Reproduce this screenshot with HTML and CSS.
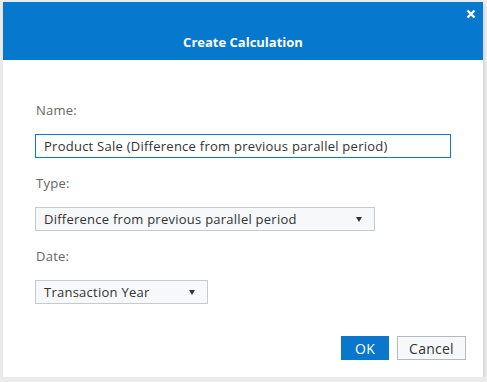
FILE: index.html
```html
<!DOCTYPE html>
<html lang="en">
<head>
    <meta charset="UTF-8" />
    <title>Create Calculation</title>
    <link rel="stylesheet" href="styles.css">
</head>
<body>
<div class="dialog">
    <div class="dialog-header">
        <h1>Create Calculation</h1>
        <button class="close" title="Close">
            <svg width="10" height="10" viewBox="0 0 10 10"><path d="M1.5 1.5 L8.5 8.5 M8.5 1.5 L1.5 8.5" stroke="#fff" stroke-width="2.4"/></svg>
        </button>
    </div>
    <div class="dialog-body">
        <label class="field-label" for="name">Name:</label>
        <input class="text-input" id="name" type="text" value="Product Sale (Difference from previous parallel period)" />

        <label class="field-label">Type:</label>
        <div class="dropdown dropdown-type">
            <span>Difference from previous parallel period</span>
            <i class="caret"></i>
        </div>

        <label class="field-label">Date:</label>
        <div class="dropdown dropdown-date">
            <span>Transaction Year</span>
            <i class="caret"></i>
        </div>

        <div class="actions">
            <button class="btn btn-primary">OK</button>
            <button class="btn">Cancel</button>
        </div>
    </div>
</div>
</body>
</html>
```

FILE: styles.css
```css
body {
    margin: 0;
    background-color: #ebebeb;
    font-family: "Open Sans", Lato, sans-serif;
    font-size: 13px;
    color: #333;
}
.dialog {
    width: 480px;
    height: 375px;
    margin: 2px 0 0 3px;
    background-color: white;
    box-shadow: 1px 2px 3px rgba(0,0,0,0.12);
    display: flex;
    flex-direction: column;
}
.dialog-header {
    position: relative;
    height: 58px;
    box-sizing: border-box;
    padding-bottom: 10px;
    background-color: #0678cd;
    display: flex;
    align-items: flex-end;
    justify-content: center;
}
.dialog-header h1 {
    margin: 0;
    font-size: 13px;
    line-height: 16px;
    font-weight: bold;
    color: white;
}
.close {
    position: absolute;
    top: 5px;
    right: 5px;
    width: 14px;
    height: 14px;
    padding: 0;
    border: none;
    background: none;
    display: flex;
    align-items: center;
    justify-content: center;
}
.dialog-body {
    padding: 42px 0 0 32px;
    display: flex;
    flex-direction: column;
    align-items: flex-start;
    letter-spacing: 0.25px;
}
.field-label {
    line-height: 16px;
    color: #666;
    margin-bottom: 16px;
    padding-left: 1px;
}
.text-input {
    width: 416px;
    height: 24px;
    box-sizing: border-box;
    border: 1px solid #0a78d0;
    padding: 0 8px;
    font-family: inherit;
    font-size: 13px;
    letter-spacing: inherit;
    color: #333;
    margin-bottom: 17px;
    outline: none;
}
.dropdown {
    height: 24px;
    box-sizing: border-box;
    border: 1px solid #c6cacf;
    background-color: #f7f8fa;
    padding: 0 8px;
    display: flex;
    align-items: center;
    justify-content: space-between;
    margin-bottom: 17px;
}
.dropdown-type {
    width: 340px;
}
.dropdown-date {
    width: 173px;
    margin-bottom: 32px;
}
.caret {
    width: 0;
    height: 0;
    border-left: 3px solid transparent;
    border-right: 3px solid transparent;
    border-top: 5px solid #333;
    margin-right: 4px;
}
.actions {
    align-self: stretch;
    display: flex;
    justify-content: flex-end;
    gap: 8px;
    padding-right: 17px;
}
.btn {
    height: 24px;
    padding: 0;
    width: 69px;
    border: 1px solid #b4b9bf;
    background-color: #f7f8fa;
    font-family: inherit;
    font-size: 14px;
    letter-spacing: inherit;
    color: #333;
}
.btn-primary {
    width: 48px;
    border: none;
    background-color: #0a77cc;
    color: white;
}
```
